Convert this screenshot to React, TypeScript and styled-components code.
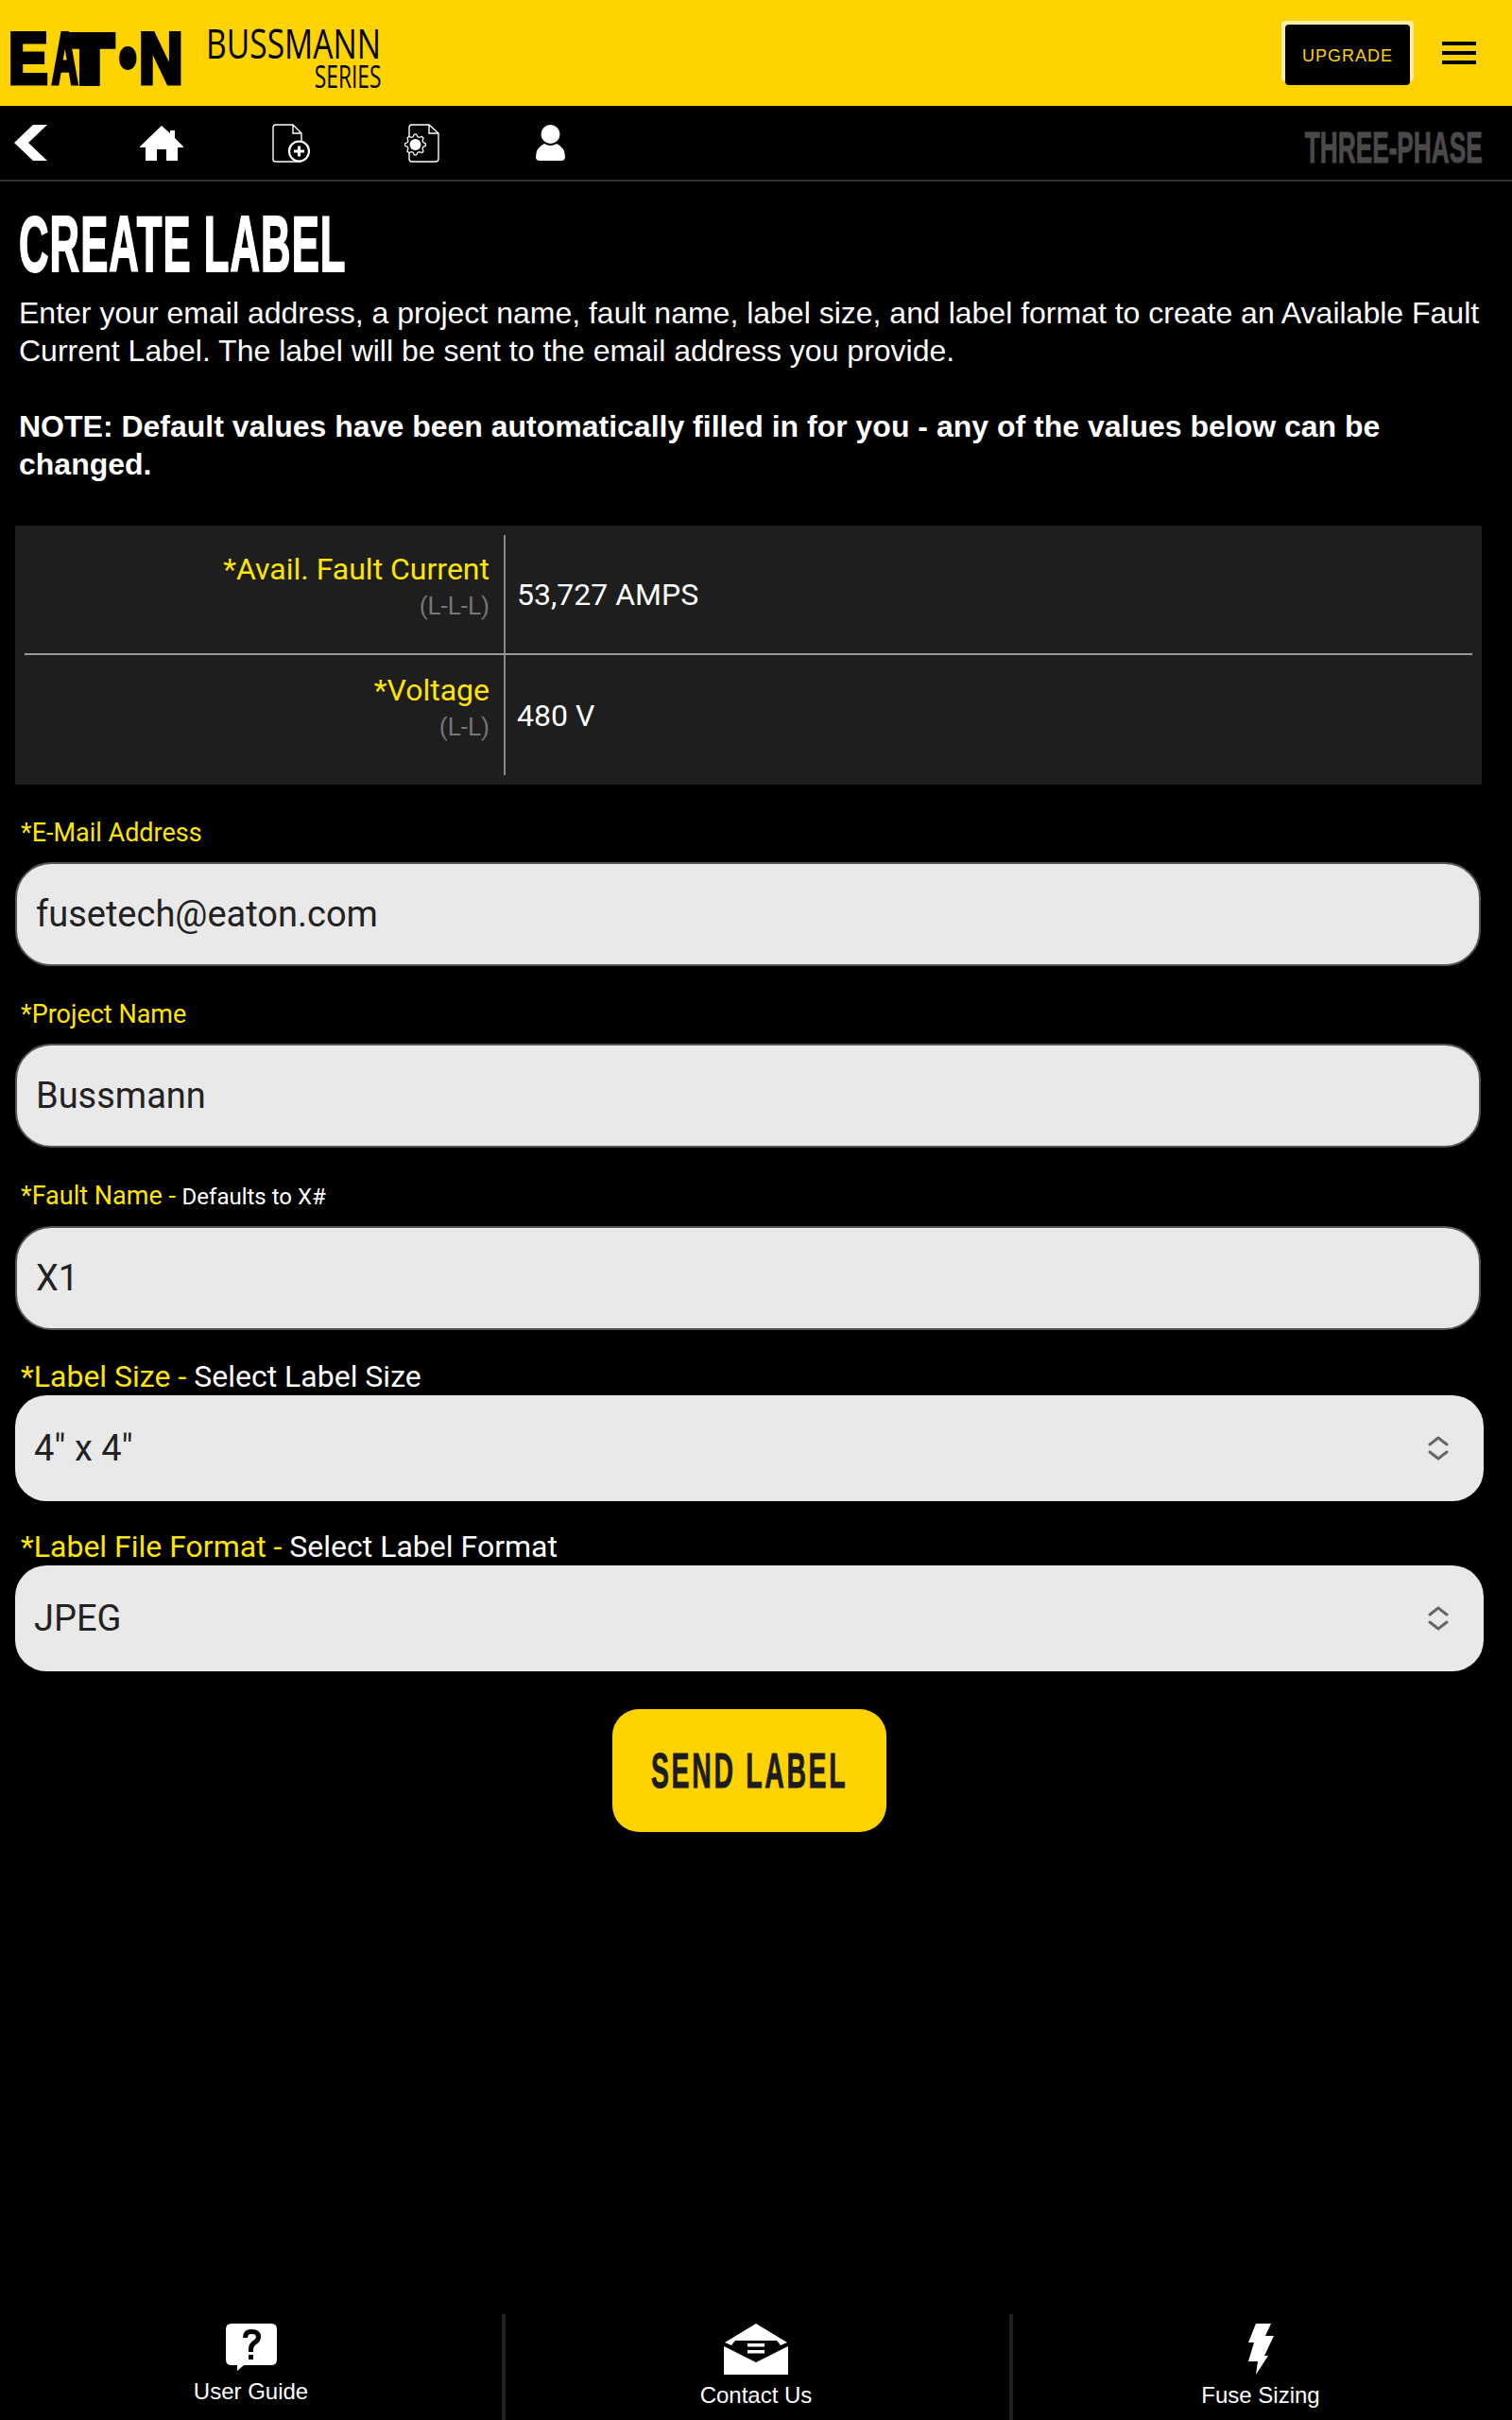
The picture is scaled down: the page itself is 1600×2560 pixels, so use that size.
import React from 'react';
import styled, { createGlobalStyle } from 'styled-components';

const GlobalStyle = createGlobalStyle`
  html, body {
    margin: 0;
    padding: 0;
    background: #000;
  }
  * {
    box-sizing: border-box;
  }
`;

const YELLOW = '#ffd300';
const LABEL_YELLOW = '#ffe600';
const DISPLAY_FONT = `"Liberation Sans", Arial, sans-serif`;

const Page = styled.div`
  display: flex;
  flex-direction: column;
  min-height: 2560px;
  background: #000;
  color: #fff;
  font-family: Roboto, sans-serif;
`;

const TopBar = styled.header`
  display: flex;
  align-items: center;
  height: 112px;
  padding: 0 38px 0 11px;
  background: ${YELLOW};
`;

const EatonLogo = styled.div`
  display: flex;
  align-items: center;
  width: 180px;
  height: 60px;
  margin-top: 12px;
  color: #000;
  font-family: ${DISPLAY_FONT};
  font-weight: 700;
  line-height: 60px;
`;

const LogoLetter = styled.span<{ $width: number; $scale: number; $size: number; $stroke: number; $gap?: number }>`
  display: inline-block;
  flex: none;
  width: ${(p) => p.$width}px;
  margin-left: ${(p) => p.$gap ?? 0}px;
  font-size: ${(p) => p.$size}px;
  -webkit-text-stroke: ${(p) => p.$stroke}px #000;
  transform: scaleX(${(p) => p.$scale});
  transform-origin: left center;
`;

const SeriesBlock = styled.div`
  display: flex;
  flex-direction: column;
  align-items: flex-end;
  width: 181px;
  margin: 10px 0 0 31px;
  color: #000;
  font-family: "Open Sans", sans-serif;
  font-weight: 500;
`;

const SeriesName = styled.span`
  display: inline-block;
  font-size: 43px;
  line-height: 40px;
  transform: scaleX(0.78);
  transform-origin: right center;
  white-space: nowrap;
`;

const SeriesSub = styled.span`
  display: inline-block;
  font-size: 33px;
  line-height: 30px;
  transform: scaleX(0.69);
  transform-origin: right center;
  white-space: nowrap;
`;

const UpgradeButton = styled.button`
  width: 132px;
  height: 64px;
  margin: 4px 34px 0 auto;
  padding: 2px 0 0;
  border: none;
  border-radius: 4px;
  background: #000;
  box-shadow: -4px -4px 0 0 #fdeca6, 4px -4px 0 0 #fdeca6;
  color: ${YELLOW};
  font-family: "Liberation Sans", sans-serif;
  font-size: 18px;
  letter-spacing: 1px;
`;

const MenuIcon = styled.div`
  display: flex;
  flex-direction: column;
  gap: 6px;
  width: 36px;
`;

const MenuBar = styled.span`
  display: block;
  height: 4px;
  background: #000;
`;

const SubNav = styled.nav`
  display: flex;
  align-items: center;
  height: 80px;
  padding: 0 31px 0 15px;
  border-bottom: 2px solid #333;
`;

const NavSlot = styled.div<{ $gap: number }>`
  display: flex;
  margin-left: ${(p) => p.$gap}px;
`;

const PhaseTitle = styled.span`
  display: inline-block;
  margin-left: auto;
  margin-top: 9px;
  color: #4a4a4a;
  font-family: ${DISPLAY_FONT};
  font-weight: 700;
  font-size: 46px;
  line-height: 46px;
  white-space: nowrap;
  -webkit-text-stroke: 1px #4a4a4a;
  transform: scaleX(0.57);
  transform-origin: right center;
`;

const Main = styled.main`
  display: flex;
  flex-direction: column;
  padding: 0 30px 0 16px;
`;

const PageTitle = styled.h1`
  margin: 26px 0 0 4px;
  color: #fff;
  font-family: ${DISPLAY_FONT};
  font-weight: 700;
  font-size: 84px;
  line-height: 80px;
  letter-spacing: 2px;
  white-space: nowrap;
  -webkit-text-stroke: 2px #fff;
  transform: scaleX(0.52);
  transform-origin: left center;
`;

const Intro = styled.p`
  margin: 13px 0 0 4px;
  width: 1552px;
  font-family: "Liberation Sans", sans-serif;
  font-size: 32px;
  line-height: 40px;
`;

const Note = styled.p`
  margin: 40px 0 0 4px;
  width: 1552px;
  font-family: "Liberation Sans", sans-serif;
  font-weight: 700;
  font-size: 32px;
  line-height: 40px;
`;

const SummaryTable = styled.section`
  width: 1552px;
  margin-top: 45px;
  padding: 10px;
  background: #1e1e1e;
`;

const SummaryRow = styled.div<{ $divider?: boolean }>`
  display: grid;
  grid-template-columns: 509px 1fr;
  height: 127px;
  border-bottom: ${(p) => (p.$divider ? '2px solid #999' : 'none')};
`;

const SummaryLabel = styled.div`
  display: flex;
  flex-direction: column;
  align-items: flex-end;
  justify-content: center;
  padding: 0 15px 18px 0;
  border-right: 2px solid #888;
`;

const SummaryName = styled.span`
  color: ${LABEL_YELLOW};
  font-size: 32px;
  line-height: 42px;
`;

const SummaryUnit = styled.span`
  color: #777;
  font-size: 26px;
  line-height: 36px;
`;

const SummaryValue = styled.div`
  display: flex;
  align-items: center;
  padding-left: 12px;
  color: #fff;
  font-size: 32px;
`;

const FieldGroup = styled.div<{ $top: number }>`
  margin-top: ${(p) => p.$top}px;
  width: 1552px;
`;

const FieldLabel = styled.label`
  display: block;
  margin-left: 6px;
  color: ${LABEL_YELLOW};
  font-size: 27px;
  line-height: 30px;
`;

const FieldHint = styled.span`
  color: #fff;
  font-size: 24px;
`;

const SelectLabel = styled.label`
  display: block;
  margin-left: 6px;
  color: ${LABEL_YELLOW};
  font-size: 32px;
  line-height: 36px;
  white-space: nowrap;
`;

const SelectHint = styled.span`
  color: #fff;
`;

const TextField = styled.input`
  display: block;
  width: 1551px;
  height: 110px;
  margin-top: 16px;
  padding: 0 20px;
  border: 2px solid #555;
  border-radius: 38px;
  outline: none;
  background: #e9e9e9;
  color: #222;
  font-family: Roboto, sans-serif;
  font-size: 38px;
`;

const SelectWrap = styled.div`
  position: relative;
  width: 1554px;
  margin-top: 2px;
`;

const SelectField = styled.select`
  display: block;
  width: 100%;
  height: 112px;
  padding: 0 20px;
  border: none;
  border-radius: 33px;
  outline: none;
  appearance: none;
  background: #e9e9e9;
  color: #222;
  font-family: Roboto, sans-serif;
  font-size: 38px;
`;

const SelectChevron = styled.svg`
  position: absolute;
  top: 43px;
  right: 37px;
  pointer-events: none;
`;

const SendButton = styled.button`
  display: flex;
  align-items: center;
  justify-content: center;
  align-self: center;
  width: 290px;
  height: 130px;
  margin: 40px 0 0 0;
  padding: 0;
  border: none;
  border-radius: 28px;
  background: ${YELLOW};
`;

const SendText = styled.span`
  display: inline-block;
  flex: none;
  color: #1c1c1c;
  font-family: ${DISPLAY_FONT};
  font-weight: 700;
  font-size: 52px;
  letter-spacing: 5px;
  white-space: nowrap;
  -webkit-text-stroke: 1px #1c1c1c;
  transform: scaleX(0.545);
`;

const Footer = styled.footer`
  display: grid;
  grid-template-columns: 535px 537px 1fr;
  height: 112px;
  margin-top: auto;
`;

const FooterItem = styled.a<{ $divider?: boolean; $inset?: number }>`
  display: flex;
  flex-direction: column;
  align-items: center;
  padding-top: 10px;
  padding-right: ${(p) => p.$inset ?? 0}px;
  border-right: ${(p) => (p.$divider ? '4px solid #222' : 'none')};
  color: #fff;
  font-family: "Liberation Sans", sans-serif;
  font-size: 24px;
`;

const FooterLabel = styled.span<{ $gap: number }>`
  margin-top: ${(p) => p.$gap}px;
  line-height: 28px;
`;

const gearPoints = (() => {
  const pts: string[] = [];
  const teeth = 8;
  for (let i = 0; i < teeth * 4; i++) {
    const r = i % 4 < 2 ? 11 : 8.6;
    const a = ((i - 0.5) / (teeth * 4)) * Math.PI * 2;
    pts.push(`${(11.5 + r * Math.cos(a)).toFixed(2)},${(22 + r * Math.sin(a)).toFixed(2)}`);
  }
  return pts.join(' ');
})();

const BackIcon = () => (
  <svg width="35" height="38" viewBox="0 0 35 38">
    <path d="M20 0H35L15 19L35 38H20L0 19Z" fill="#fff" />
  </svg>
);

const HomeIcon = () => (
  <svg width="46" height="37" viewBox="0 0 46 37">
    <path
      d="M23 0L32 8V5H37V13L46 22V23H40V37H28V25H18V37H6V23H0V22Z"
      fill="#fff"
    />
  </svg>
);

const DocPlusIcon = () => (
  <svg width="40" height="41" viewBox="0 0 40 41">
    <path
      d="M4 1H22L31 10V38Q31 40 29 40H4Q1 40 1 38V4Q1 1 4 1ZM22 1V10H31"
      fill="none"
      stroke="#fff"
      strokeWidth="1.4"
    />
    <circle cx="28.5" cy="29" r="10.5" fill="#000" stroke="#fff" strokeWidth="2.2" />
    <path d="M28.5 23.5V34.5M23 29H34" stroke="#fff" strokeWidth="3" />
  </svg>
);

const DocGearIcon = () => (
  <svg width="37" height="41" viewBox="0 0 37 41">
    <path
      d="M8 1H26L36 10V37Q36 40 33 40H8Q5 40 5 37V4Q5 1 8 1ZM26 1V10H36"
      fill="none"
      stroke="#fff"
      strokeWidth="1.4"
    />
    <polygon points={gearPoints} fill="#000" stroke="#fff" strokeWidth="1.3" />
    <circle cx="11.5" cy="22" r="6" fill="#fff" />
  </svg>
);

const PersonIcon = () => (
  <svg width="31" height="38" viewBox="0 0 31 38">
    <ellipse cx="15.5" cy="10" rx="10" ry="10" fill="#fff" />
    <path
      d="M9 20Q15.5 24 22 20Q31 24 31 34Q31 38 27 38H4Q0 38 0 34Q0 24 9 20Z"
      fill="#fff"
    />
  </svg>
);

const HelpIcon = () => (
  <svg width="54" height="50" viewBox="0 0 54 50">
    <path
      d="M6 0H48Q54 0 54 6V38Q54 44 48 44H19L12 50V44H6Q0 44 0 38V6Q0 0 6 0Z"
      fill="#fff"
    />
    <path
      d="M18 15Q18 6 27 6Q37 6 37 14Q37 19 32 22Q29 24 29 28V30H24V27Q24 21 29 18Q32 16 32 14Q32 11 27 11Q23 11 23 15Z"
      fill="#000"
    />
    <rect x="24" y="33" width="5" height="5" fill="#000" />
  </svg>
);

const EnvelopeIcon = () => (
  <svg width="68" height="54" viewBox="0 0 68 54">
    <path d="M34 0L67 20L60 23L56 18H12L8 23L1 20Z" fill="#fff" />
    <path d="M0 24L34 41L68 24V54H0Z" fill="#fff" />
    <rect x="25" y="21" width="18" height="3.5" fill="#fff" />
    <rect x="25" y="28" width="18" height="3.5" fill="#fff" />
  </svg>
);

const BoltIcon = () => (
  <svg width="27" height="54" viewBox="0 0 27 54">
    <path d="M8 0H24L18 13H27L17 34H21L8 54L10 40H0L6 20H0Z" fill="#fff" />
  </svg>
);

const ChevronIcon = () => (
  <SelectChevron width="22" height="26" viewBox="0 0 22 26">
    <path
      d="M2 9L11 2L20 9M2 17L11 24L20 17"
      fill="none"
      stroke="#666"
      strokeWidth="3"
      strokeLinecap="round"
      strokeLinejoin="round"
    />
  </SelectChevron>
);

const App: React.FC = () => {
  return (
    <Page>
      <GlobalStyle />
      <TopBar>
        <EatonLogo aria-label="EATON">
          <LogoLetter $width={46} $scale={0.82} $size={76} $stroke={5} $gap={-2}>E</LogoLetter>
          <LogoLetter $width={25} $scale={0.5} $size={76} $stroke={5}>A</LogoLetter>
          <LogoLetter $width={50} $scale={1.1} $size={68} $stroke={10} $gap={-8}>T</LogoLetter>
          <LogoLetter $width={18} $scale={0.72} $size={22} $stroke={10} $gap={7}>O</LogoLetter>
          <LogoLetter $width={48} $scale={0.85} $size={76} $stroke={5}>N</LogoLetter>
        </EatonLogo>
        <SeriesBlock>
          <SeriesName>BUSSMANN</SeriesName>
          <SeriesSub>SERIES</SeriesSub>
        </SeriesBlock>
        <UpgradeButton>UPGRADE</UpgradeButton>
        <MenuIcon>
          <MenuBar />
          <MenuBar />
          <MenuBar />
        </MenuIcon>
      </TopBar>

      <SubNav>
        <NavSlot $gap={0}><BackIcon /></NavSlot>
        <NavSlot $gap={98}><HomeIcon /></NavSlot>
        <NavSlot $gap={94}><DocPlusIcon /></NavSlot>
        <NavSlot $gap={100}><DocGearIcon /></NavSlot>
        <NavSlot $gap={102}><PersonIcon /></NavSlot>
        <PhaseTitle>THREE-PHASE</PhaseTitle>
      </SubNav>

      <Main>
        <PageTitle>CREATE LABEL</PageTitle>
        <Intro>
          Enter your email address, a project name, fault name, label size, and label format to
          create an Available Fault Current Label. The label will be sent to the email address you
          provide.
        </Intro>
        <Note>
          NOTE: Default values have been automatically filled in for you - any of the values below
          can be changed.
        </Note>

        <SummaryTable>
          <SummaryRow $divider>
            <SummaryLabel>
              <SummaryName>*Avail. Fault Current</SummaryName>
              <SummaryUnit>(L-L-L)</SummaryUnit>
            </SummaryLabel>
            <SummaryValue>53,727 AMPS</SummaryValue>
          </SummaryRow>
          <SummaryRow>
            <SummaryLabel>
              <SummaryName>*Voltage</SummaryName>
              <SummaryUnit>(L-L)</SummaryUnit>
            </SummaryLabel>
            <SummaryValue>480 V</SummaryValue>
          </SummaryRow>
        </SummaryTable>

        <FieldGroup $top={36}>
          <FieldLabel>*E-Mail Address</FieldLabel>
          <TextField defaultValue="fusetech@eaton.com" />
        </FieldGroup>
        <FieldGroup $top={36}>
          <FieldLabel>*Project Name</FieldLabel>
          <TextField defaultValue="Bussmann" />
        </FieldGroup>
        <FieldGroup $top={36}>
          <FieldLabel>
            *Fault Name - <FieldHint>Defaults to X#</FieldHint>
          </FieldLabel>
          <TextField defaultValue="X1" />
        </FieldGroup>
        <FieldGroup $top={31}>
          <SelectLabel>
            *Label Size - <SelectHint>Select Label Size</SelectHint>
          </SelectLabel>
          <SelectWrap>
            <SelectField defaultValue="4x4">
              <option value="4x4">4" x 4"</option>
            </SelectField>
            <ChevronIcon />
          </SelectWrap>
        </FieldGroup>
        <FieldGroup $top={30}>
          <SelectLabel>
            *Label File Format - <SelectHint>Select Label Format</SelectHint>
          </SelectLabel>
          <SelectWrap>
            <SelectField defaultValue="jpeg">
              <option value="jpeg">JPEG</option>
            </SelectField>
            <ChevronIcon />
          </SelectWrap>
        </FieldGroup>
        <SendButton>
          <SendText>SEND LABEL</SendText>
        </SendButton>
      </Main>

      <Footer>
        <FooterItem $divider>
          <HelpIcon />
          <FooterLabel $gap={8}>User Guide</FooterLabel>
        </FooterItem>
        <FooterItem $divider $inset={3}>
          <EnvelopeIcon />
          <FooterLabel $gap={8}>Contact Us</FooterLabel>
        </FooterItem>
        <FooterItem $inset={4}>
          <BoltIcon />
          <FooterLabel $gap={8}>Fuse Sizing</FooterLabel>
        </FooterItem>
      </Footer>
    </Page>
  );
};

export default App;
